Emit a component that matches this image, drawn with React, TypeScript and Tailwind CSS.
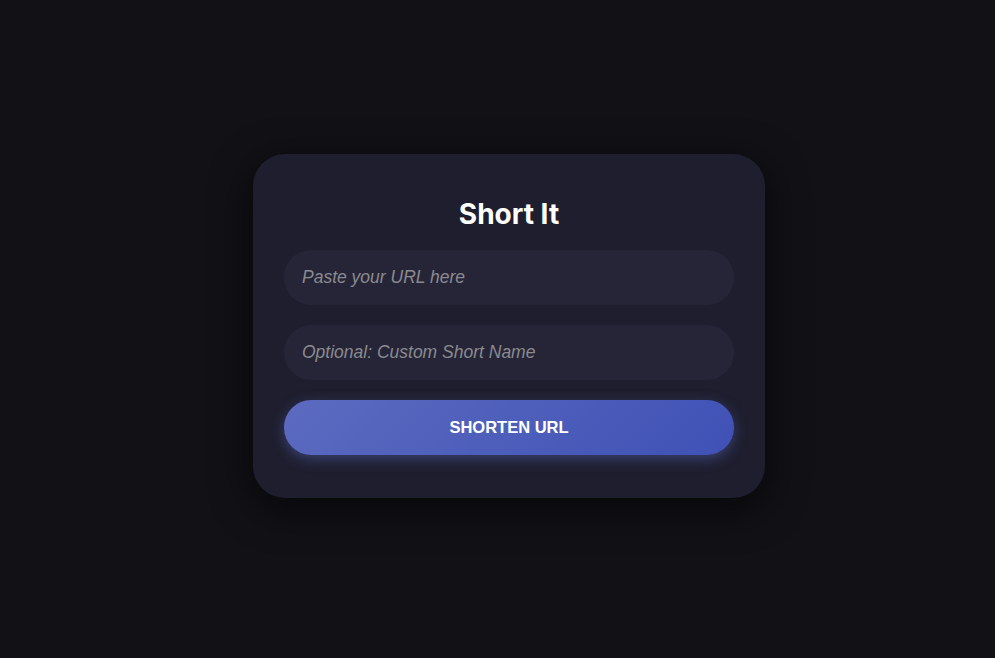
export default function App() {
  return (
    <div className="min-h-[658px] w-full bg-[#111116] pt-[154px] flex justify-center">
      <div className="ml-[23px] w-[512px] h-[344px] rounded-[32px] bg-[#1e1e2e] px-[31px] pt-[40px] shadow-[0_10px_40px_rgba(0,0,0,0.6)]">
        <h1 className="text-center text-[28px] leading-[40px] font-bold text-white font-['Inter',sans-serif]">
          Short It
        </h1>
        <div className="mt-[16px] flex flex-col gap-[20px]">
          <input
            type="text"
            placeholder="Paste your URL here"
            className="h-[55px] w-full rounded-[27px] bg-[#252537] px-[18px] text-[17.5px] italic text-white outline-none placeholder:text-[#8a8a8f] font-['Liberation_Sans',sans-serif]"
          />
          <input
            type="text"
            placeholder="Optional: Custom Short Name"
            className="h-[55px] w-full rounded-[27px] bg-[#252537] px-[18px] text-[17.5px] italic text-white outline-none placeholder:text-[#8a8a8f] font-['Liberation_Sans',sans-serif]"
          />
          <button className="h-[55px] w-full rounded-[27px] bg-linear-135 from-[#5c6bc0] to-[#3f51b5] text-[16.5px] font-bold text-white shadow-[0_4px_14px_rgba(92,107,192,0.45)] font-['Liberation_Sans',sans-serif]">
            SHORTEN URL
          </button>
        </div>
      </div>
    </div>
  );
}
